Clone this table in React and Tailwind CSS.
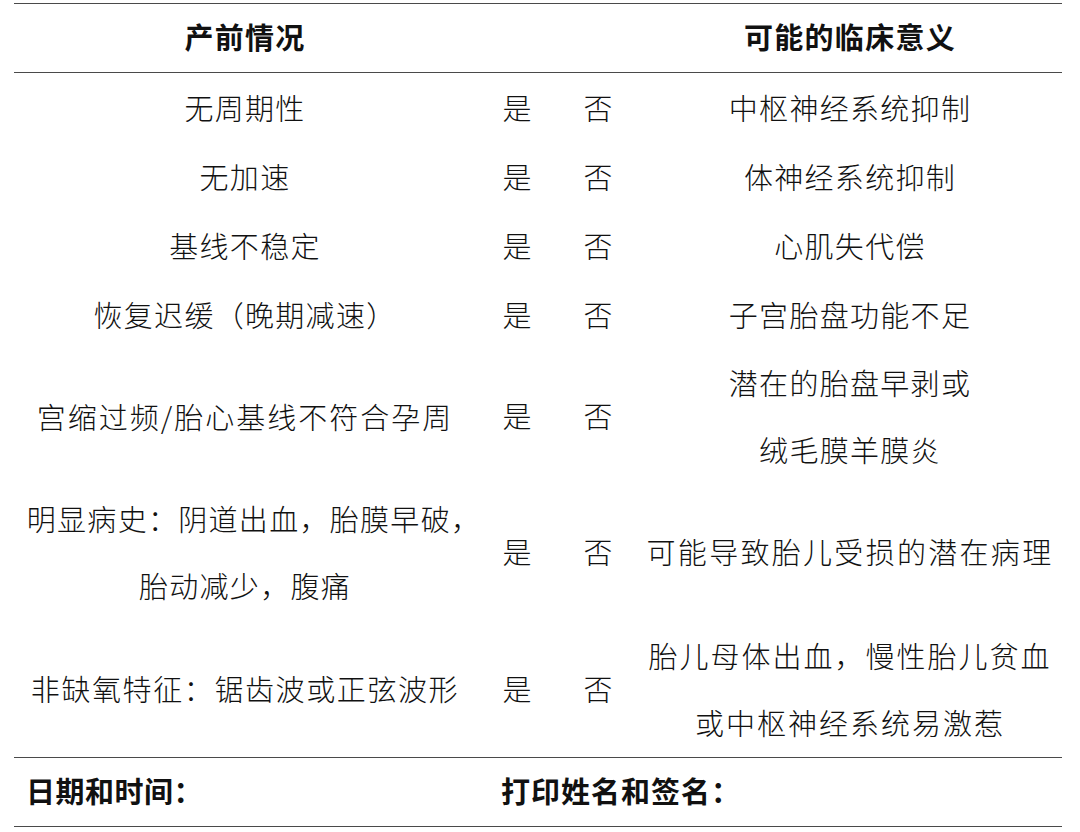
const ROWS = [
  { sign: ['无周期性'], meaning: ['中枢神经系统抑制'], h: 'h-[69px]' },
  { sign: ['无加速'], meaning: ['体神经系统抑制'], h: 'h-[69px]' },
  { sign: ['基线不稳定'], meaning: ['心肌失代偿'], h: 'h-[69px]' },
  { sign: ['恢复迟缓（晚期减速）'], meaning: ['子宫胎盘功能不足'], h: 'h-[69px]' },
  {
    sign: ['宫缩过频/胎心基线不符合孕周'],
    meaning: ['潜在的胎盘早剥或', '绒毛膜羊膜炎'],
    h: 'h-[134px]',
    signTrack: 'tracking-[2px]',
  },
  {
    // first line ends in a comma, so nudge it right to line up with the original
    sign: ['明显病史：阴道出血，胎膜早破，', '胎动减少，腹痛'],
    signFirst: 'ml-[18px]',
    meaning: ['可能导致胎儿受损的潜在病理'],
    h: 'h-[137px]',
    meaningTrack: 'tracking-[2.3px]',
  },
  {
    sign: ['非缺氧特征：锯齿波或正弦波形'],
    meaning: ['胎儿母体出血，慢性胎儿贫血', '或中枢神经系统易激惹'],
    h: 'h-[137px]',
    signTrack: 'tracking-[1.6px]',
    meaningTrack: 'tracking-[2px]',
  },
];

const GRID = 'grid grid-cols-[462px_82px_80px_424px]';

function Lines({ lines, track, first }) {
  return (
    <div className={`flex flex-col items-center leading-[67px] whitespace-nowrap ${track || 'tracking-[1.3px]'}`}>
      {lines.map((l, i) => (
        <span key={l} className={i === 0 ? first : ''}>
          {l}
        </span>
      ))}
    </div>
  );
}

export default function App() {
  return (
    <div className="w-[1080px] h-[832px] bg-white pt-[3px] pl-[14px] font-['Noto_Sans_CJK_SC',sans-serif] text-[29px] font-light text-[#111]">
      <div className="w-[1048px]">
        {/* Header */}
        <div className={`${GRID} h-[70px] items-center border-y-[1.5px] border-[#4a4a4a] font-bold pb-[3px]`}>
          <div className="text-center tracking-[1.3px]">产前情况</div>
          <div />
          <div />
          <div className="text-center tracking-[1.3px]">可能的临床意义</div>
        </div>

        {ROWS.map((row, i) => (
          <div key={i} className={`${GRID} ${row.h} items-center`}>
            <Lines lines={row.sign} track={row.signTrack} first={row.signFirst} />
            <div className="text-center">是</div>
            <div className="text-center">否</div>
            <Lines lines={row.meaning} track={row.meaningTrack} />
          </div>
        ))}

        {/* Signature row */}
        <div className="h-[70px] flex items-center border-y-[1.5px] border-[#4a4a4a] font-bold pb-[3px]">
          <span className="w-[487px] pl-[12px] tracking-[0.5px]">日期和时间：</span>
          <span className="tracking-[1px]">打印姓名和签名：</span>
        </div>
      </div>
    </div>
  );
}
